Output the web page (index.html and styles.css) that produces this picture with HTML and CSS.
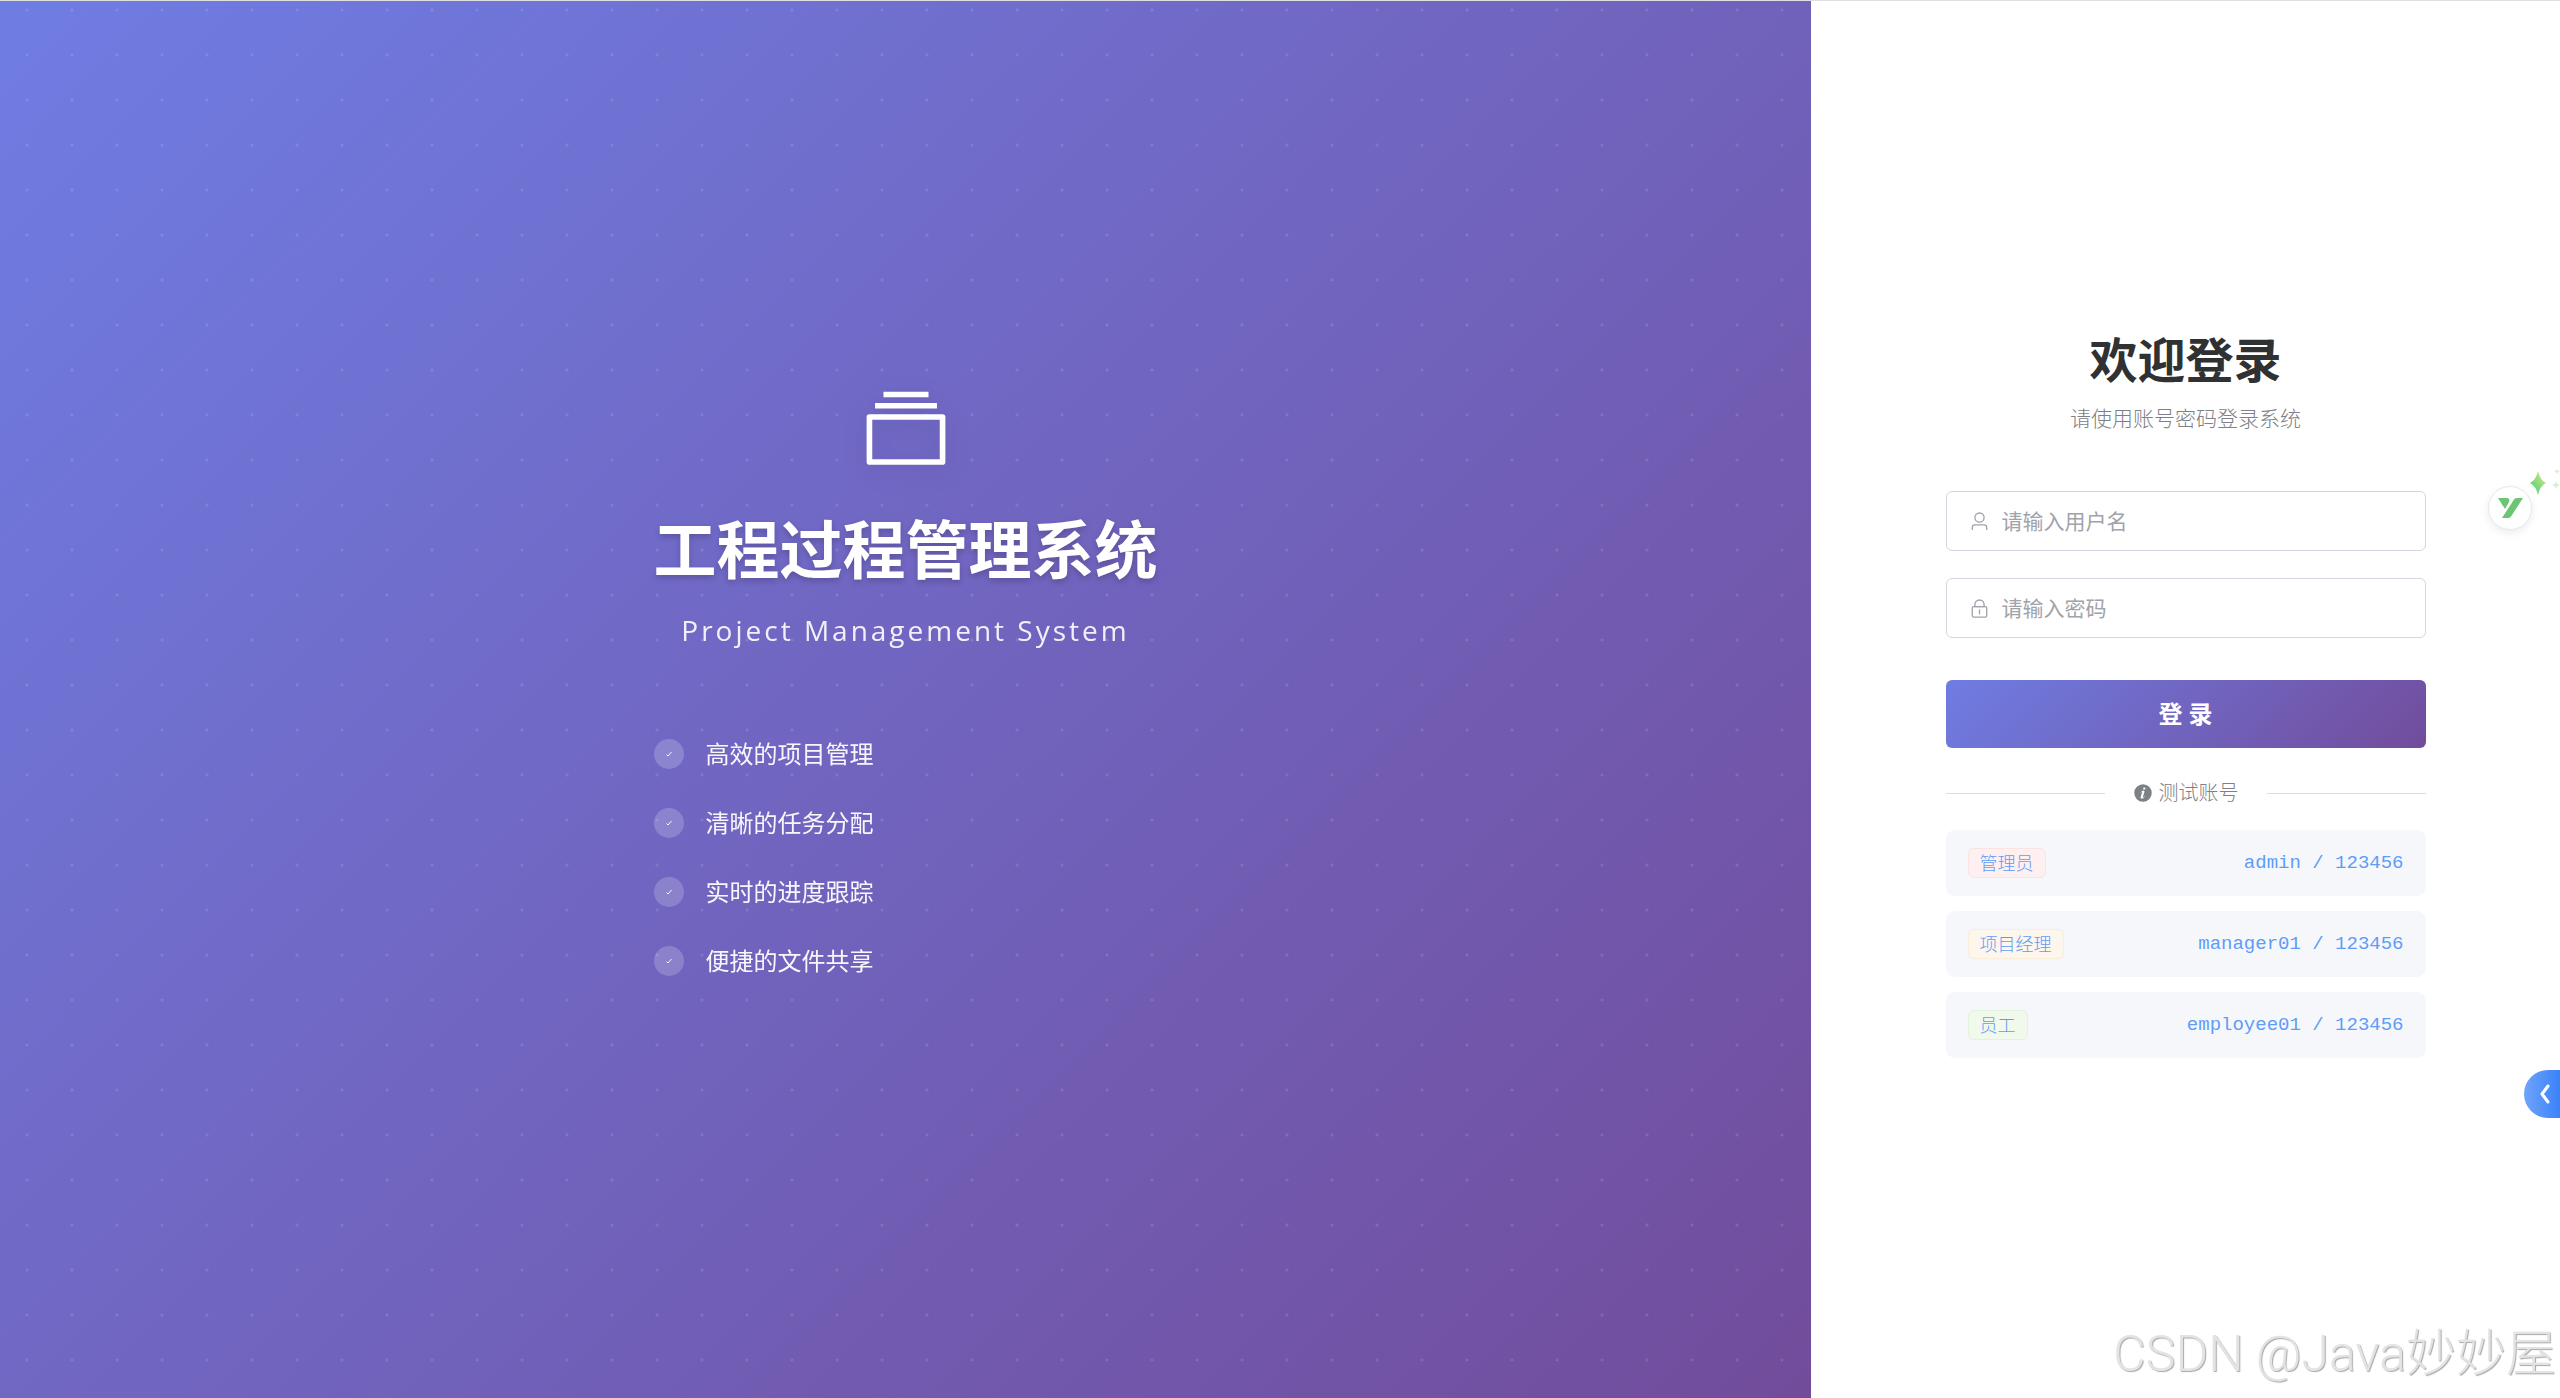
FILE: index.html
```
<!DOCTYPE html>
<html lang="zh-CN">

<head>
  <meta charset="UTF-8">
  <meta name="viewport" content="width=device-width, initial-scale=1.0">
  <title>工程过程管理系统</title>
  <link rel="stylesheet" href="styles.css">
</head>

<body>
  <div class="login-page">
    <div class="login-left">
      <div class="brand">
        <svg class="brand-icon" viewBox="0 0 1024 1024">
          <path fill="currentColor" d="M128 384v448h768V384H128zm-32-64h832a32 32 0 0 1 32 32v512a32 32 0 0 1-32 32H96a32 32 0 0 1-32-32V352a32 32 0 0 1 32-32zm64-128h704v64H160zm96-128h512v64H256z" />
        </svg>
        <h1 class="brand-title">工程过程管理系统</h1>
        <p class="brand-subtitle">Project Management System</p>
        <ul class="feature-list">
          <li><span class="check"><svg viewBox="0 0 6 6"><path d="M.5 3.5l1.5 1.5L5.500 1" /></svg></span>高效的项目管理</li>
          <li><span class="check"><svg viewBox="0 0 6 6"><path d="M.5 3.5l1.5 1.5L5.500 1" /></svg></span>清晰的任务分配</li>
          <li><span class="check"><svg viewBox="0 0 6 6"><path d="M.5 3.5l1.5 1.5L5.500 1" /></svg></span>实时的进度跟踪</li>
          <li><span class="check"><svg viewBox="0 0 6 6"><path d="M.5 3.5l1.5 1.5L5.500 1" /></svg></span>便捷的文件共享</li>
        </ul>
      </div>
    </div>

    <div class="login-right">
      <div class="login-box">
        <h2 class="login-title">欢迎登录</h2>
        <p class="login-tip">请使用账号密码登录系统</p>
        <form class="login-form">
          <label class="field">
            <svg viewBox="0 0 1024 1024">
              <path fill="currentColor" d="M512 512a192 192 0 1 0 0-384 192 192 0 0 0 0 384zm0 64a256 256 0 1 1 0-512 256 256 0 0 1 0 512zm320 320v-96a96 96 0 0 0-96-96H288a96 96 0 0 0-96 96v96a32 32 0 1 1-64 0v-96a160 160 0 0 1 160-160h448a160 160 0 0 1 160 160v96a32 32 0 1 1-64 0z" />
            </svg>
            <input type="text" name="username" placeholder="请输入用户名" aria-label="用户名">
          </label>
          <label class="field">
            <svg viewBox="0 0 1024 1024">
              <path fill="currentColor" d="M224 448a32 32 0 0 0-32 32v384a32 32 0 0 0 32 32h576a32 32 0 0 0 32-32V480a32 32 0 0 0-32-32H224zm0-64h576a96 96 0 0 1 96 96v384a96 96 0 0 1-96 96H224a96 96 0 0 1-96-96V480a96 96 0 0 1 96-96z" />
              <path fill="currentColor" d="M512 544a32 32 0 0 1 32 32v192a32 32 0 1 1-64 0V576a32 32 0 0 1 32-32zm192-160v-64a192 192 0 1 0-384 0v64h384zM512 64a256 256 0 0 1 256 256v128H256V320A256 256 0 0 1 512 64z" />
            </svg>
            <input type="password" name="password" placeholder="请输入密码" aria-label="密码">
          </label>
          <button type="button" class="login-btn">登 录</button>
        </form>

        <div class="divider">
          <span class="divider-text">
            <svg viewBox="0 0 1024 1024">
              <path fill="currentColor" d="M512 64a448 448 0 1 1 0 896.064A448 448 0 0 1 512 64zm67.200 275.072c33.280 0 60.288-23.104 60.288-57.344s-27.072-57.344-60.288-57.344c-33.280 0-60.160 23.104-60.160 57.344s26.880 57.344 60.160 57.344zM590.912 699.200c0-6.848 2.368-24.640 1.024-34.752l-52.608 60.544c-10.880 11.456-24.512 19.392-30.912 17.280a12.992 12.992 0 0 1-8.256-14.720l87.680-276.992c7.168-35.136-12.544-67.200-54.336-71.296-44.096 0-108.992 44.736-148.480 101.504 0 6.784-1.280 23.680.064 33.792l52.544-60.608c10.880-11.328 23.552-19.328 29.952-17.152a12.800 12.800 0 0 1 7.808 16.128L388.480 728.576c-10.048 32.256 8.960 63.872 55.040 71.040 67.840 0 107.904-43.648 147.456-100.416z" />
            </svg>
            测试账号
          </span>
        </div>

        <ul class="account-list">
          <li><span class="tag tag-danger">管理员</span><code>admin / 123456</code></li>
          <li><span class="tag tag-warning">项目经理</span><code>manager01 / 123456</code></li>
          <li><span class="tag tag-success">员工</span><code>employee01 / 123456</code></li>
        </ul>
      </div>
    </div>
  </div>

  <!-- floating widgets -->
  <button type="button" class="float-helper" aria-label="助手">
    <svg viewBox="0 0 26 20">
      <path fill="#6cc573" d="M1 0h9c2 0 3 2 2 4L8 11z" />
      <path fill="#6cc573" d="M20 0h6L15 17c-1 2-2 3-4 3H5L16 3c1-2 2-3 4-3z" />
    </svg>
  </button>
  <svg class="sparkle" viewBox="0 0 30 30">
    <defs>
      <linearGradient id="spark" x1="0" y1="1" x2="1" y2="0">
        <stop offset="0" stop-color="#3ecf6a" />
        <stop offset="0.500" stop-color="#8bdc80" />
        <stop offset="1" stop-color="#fbe27a" />
      </linearGradient>
    </defs>
    <path fill="url(#spark)" d="M8 3q2 9 8 12q-6 3-8 12q-2-9-8-12q6-3 8-12z" />
    <path fill="#d5f2cf" d="M27 1q.5 2 3 2q-2.500 1-3 3q-.5-2-3-3q2.500 0 3-2zM26 13q.5 3 4 4q-3.500 1-4 4q-.5-3-4-4q3.500-1 4-4z" />
  </svg>
  <button type="button" class="side-toggle" aria-label="展开">
    <svg viewBox="0 0 10 20"><path d="M8 2L2 10l6 8" /></svg>
  </button>
  <div class="watermark">CSDN @Java妙妙屋</div>
</body>

</html>
```
FILE: styles.css
```
* {
  box-sizing: border-box;
}

body {
  margin: 0;
  font-family: "Open Sans", "Noto Sans CJK SC", sans-serif;
  color: #303133;
  background: #fff;
}

h1,
h2,
p,
ul {
  margin: 0;
  padding: 0;
}

ul {
  list-style: none;
}

.login-page {
  display: flex;
  min-height: 100vh;
  border-top: 1px solid #dedfe0;
}

.login-left {
  flex: 1;
  display: flex;
  align-items: center;
  justify-content: center;
  color: #fff;
  background:
    radial-gradient(circle at 27px 9px, rgba(255, 255, 255, 0.12) 1px, transparent 2px) 0 0 / 45px 45px,
    linear-gradient(135deg, #6f7de3 0%, #724c9b 100%);
}

.brand {
  display: flex;
  flex-direction: column;
  align-items: center;
  padding-bottom: 34px;
}

.brand-icon {
  width: 90px;
  height: 90px;
  filter: drop-shadow(0 6px 12px rgba(0, 0, 0, 0.1));
}

.brand-title {
  margin-top: 28px;
  font-size: 63px;
  font-weight: 700;
  line-height: 90px;
  text-shadow: 0 3px 6px rgba(0, 0, 0, 0.2);
}

.brand-subtitle {
  margin-top: 16px;
  font-size: 28px;
  line-height: 40px;
  letter-spacing: 3px;
  opacity: 0.9;
}

.feature-list {
  align-self: stretch;
  display: flex;
  flex-direction: column;
  gap: 33px;
  margin-top: 86px;
}

.feature-list li {
  display: flex;
  align-items: center;
  gap: 22px;
  font-size: 24px;
  line-height: 36px;
  opacity: 0.95;
}

.check {
  display: flex;
  align-items: center;
  justify-content: center;
  width: 30px;
  height: 30px;
  border-radius: 50%;
  background: rgba(255, 255, 255, 0.2);
}

.check svg {
  width: 6px;
  height: 6px;
}

.check path {
  fill: none;
  stroke: #fff;
}

.login-right {
  width: 749px;
  display: flex;
  align-items: center;
  justify-content: center;
  background: #fff;
}

.login-box {
  width: 480px;
  padding-bottom: 14px;
}

.login-title {
  font-size: 48px;
  font-weight: 700;
  line-height: 66px;
  text-align: center;
}

.login-tip {
  margin-top: 10px;
  font-size: 21px;
  line-height: 30px;
  font-weight: 300;
  text-align: center;
  color: #7d8086;
}

.login-form {
  display: flex;
  flex-direction: column;
  gap: 27px;
  margin-top: 58px;
}

.field {
  display: flex;
  align-items: center;
  gap: 12px;
  height: 60px;
  padding: 0 22px;
  border: 1px solid #d3d6de;
  border-radius: 6px;
  color: #a0a3aa;
}

.field svg {
  width: 21px;
  height: 21px;
}

.field input {
  flex: 1;
  min-width: 0;
  padding: 0;
  border: 0;
  outline: 0;
  background: none;
  font-family: inherit;
  font-size: 21px;
  color: #606266;
}

.field input::placeholder {
  color: #a0a3aa;
}

.login-btn {
  height: 68px;
  margin-top: 15px;
  padding-bottom: 4px;
  border: 0;
  border-radius: 6px;
  font-family: inherit;
  font-size: 24px;
  font-weight: 600;
  color: #fff;
  background: linear-gradient(135deg, #6f7de3 0%, #724c9b 100%);
}

.divider {
  display: flex;
  align-items: center;
  gap: 28px;
  margin-top: 30px;
}

.divider::before,
.divider::after {
  content: "";
  flex: 1;
  height: 1px;
  background: #dcdcde;
}

.divider-text {
  display: flex;
  align-items: center;
  gap: 6px;
  font-size: 20px;
  line-height: 30px;
  font-weight: 300;
  color: #7d8086;
}

.divider-text svg {
  width: 20px;
  height: 20px;
}

.account-list {
  display: flex;
  flex-direction: column;
  gap: 15px;
  margin-top: 22px;
}

.account-list li {
  display: flex;
  align-items: center;
  justify-content: space-between;
  height: 66px;
  padding: 0 22px;
  border-radius: 9px;
  background: #f5f7fa;
  color: #5f9cf8;
}

.account-list code {
  font-family: "Liberation Mono", monospace;
  font-size: 19px;
}

.tag {
  padding: 0 11px;
  border: 1px solid;
  border-radius: 6px;
  font-size: 18px;
  line-height: 28px;
  font-weight: 300;
}

.tag-danger {
  background: #fef0f0;
  border-color: #fde2e2;
}

.tag-warning {
  background: #fdf6ec;
  border-color: #faecd8;
}

.tag-success {
  background: #f0f9eb;
  border-color: #e1f3d8;
}

.float-helper {
  position: fixed;
  right: 28px;
  top: 486px;
  display: flex;
  align-items: center;
  justify-content: center;
  width: 44px;
  height: 44px;
  padding: 0;
  border: 1px solid #e8e8e8;
  border-radius: 50%;
  background: #fff;
  box-shadow: 0 3px 8px rgba(0, 0, 0, 0.08);
}

.float-helper svg {
  width: 26px;
  height: 20px;
}

.sparkle {
  position: fixed;
  right: 0;
  top: 468px;
  width: 30px;
  height: 30px;
}

.side-toggle {
  position: fixed;
  right: 0;
  top: 1070px;
  width: 36px;
  height: 48px;
  padding: 0 0 0 6px;
  border: 0;
  border-radius: 24px 0 0 24px;
  background: linear-gradient(90deg, #6ea4fb, #3b82fa);
}

.side-toggle svg {
  display: block;
  width: 10px;
  height: 20px;
  margin: auto;
}

.side-toggle path {
  fill: none;
  stroke: #fff;
  stroke-width: 3;
  stroke-linecap: round;
  stroke-linejoin: round;
}

.watermark {
  position: fixed;
  right: 4px;
  bottom: 8px;
  font-family: "Roboto", "Noto Sans CJK SC", sans-serif;
  font-size: 50px;
  font-weight: 300;
  line-height: 72px;
  color: #e3e3e3;
  text-shadow: 1px 1px 1px #a8a8a8;
  pointer-events: none;
}
```
